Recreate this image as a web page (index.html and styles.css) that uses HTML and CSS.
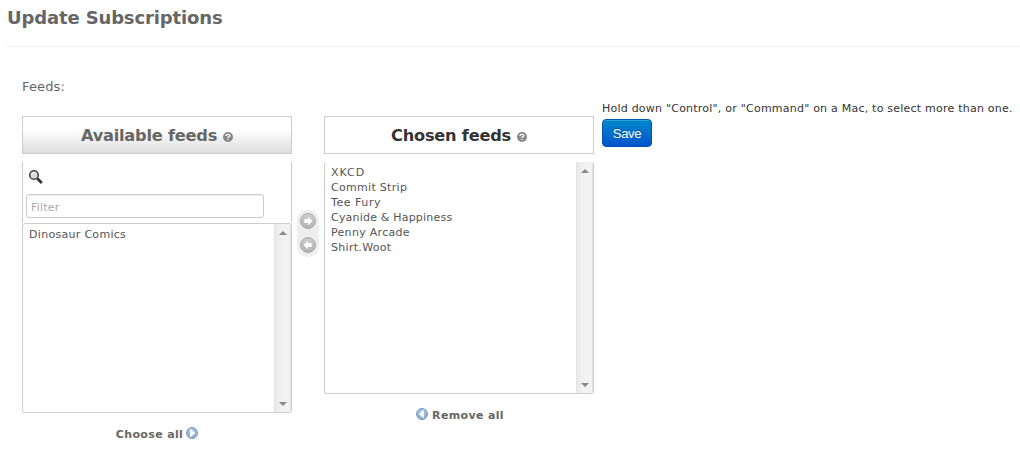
FILE: index.html
```html
<!DOCTYPE html>
<html lang="en">
<head>
<meta charset="utf-8">
<title>Update Subscriptions</title>
<link rel="stylesheet" href="styles.css">
</head>
<body>
<svg class="defs" width="0" height="0" aria-hidden="true">
  <defs>
    <linearGradient id="gray" x1="0" y1="0" x2="0" y2="1"><stop offset="0" stop-color="#cfcfcf"/><stop offset="1" stop-color="#b2b2b2"/></linearGradient>
    <linearGradient id="blue" x1="0" y1="0" x2="0" y2="1"><stop offset="0" stop-color="#a3c3e4"/><stop offset="1" stop-color="#8daccb"/></linearGradient>
    <symbol id="help" viewBox="0 0 10 10"><circle cx="5" cy="5" r="5" fill="#888"/><path d="M3 4V3.3Q3.4 2.3 5 2.3T6.9 3.6Q6.9 4.4 5.8 4.8T5 5.9M5 6.9V8" fill="none" stroke="#fff" stroke-width="1.3"/></symbol>
    <symbol id="arrow" viewBox="0 0 16 16"><circle cx="8" cy="8" r="7.5" fill="url(#gray)" stroke="#a9a9a9"/><path d="M4.3 6H8V3.8L12.5 8L8 12.2V10H4.3Z" fill="#fff"/></symbol>
    <symbol id="play" viewBox="0 0 12 12"><circle cx="6" cy="6" r="5.5" fill="url(#blue)" stroke="#7c9cbd"/><path d="M4.2 2.2H5.2L9.2 6L5.2 9.8H4.2Z" fill="#fff"/></symbol>
  </defs>
</svg>
<h1 class="title"><span>Update Subscriptions</span></h1>
<main class="form">
  <div class="label">Feeds:</div>
  <div class="row">
    <section class="column">
      <h2 class="heading available"><span>Available feeds</span><svg class="help"><use href="#help"/></svg></h2>
      <div class="filter">
        <svg class="search" viewBox="0 0 16 16"><path d="M9.3 9.5L13.8 14" stroke="#333" stroke-width="2.8"/><circle cx="6" cy="6" r="4.3" fill="#d9dddd" stroke="#444" stroke-width="1.6"/><path d="M3.6 5.4Q4.2 3.5 6.5 3.6" fill="none" stroke="#fff"/></svg>
        <input class="input" type="text" placeholder="Filter">
      </div>
      <div class="select short">
        <ul class="options"><li>Dinosaur Comics</li></ul>
        <div class="scrollbar"><i class="up"></i><i class="down"></i></div>
      </div>
      <a class="all choose"><span>Choose all</span><svg><use href="#play"/></svg></a>
    </section>
    <div class="chooser">
      <svg><use href="#arrow"/></svg>
      <svg class="flip"><use href="#arrow"/></svg>
    </div>
    <section class="column">
      <h2 class="heading chosen"><span>Chosen feeds</span><svg class="help"><use href="#help"/></svg></h2>
      <div class="select tall">
        <ul class="options"><li class="loose">XKCD</li><li>Commit Strip</li><li class="wide">Tee Fury</li><li class="snug">Cyanide &amp; Happiness</li><li>Penny Arcade</li><li>Shirt.Woot</li></ul>
        <div class="scrollbar"><i class="up"></i><i class="down"></i></div>
      </div>
      <a class="all remove"><svg class="flip"><use href="#play"/></svg><span>Remove all</span></a>
    </section>
    <div class="side">
      <p class="hint">Hold down "Control", or "Command" on a Mac, to select more than one.</p>
      <button class="save" type="button">Save</button>
    </div>
  </div>
</main>
</body>
</html>
```
FILE: styles.css
```css
* { box-sizing: border-box; }
body {
  margin: 0;
  height: 451px;
  overflow: hidden;
  background: #fff;
  color: #666;
  font: 11px/15px "DejaVu Sans", Verdana, sans-serif;
}
.defs { position: absolute; }
h1, h2, p, ul { margin: 0; padding: 0; }
ul { list-style: none; }
svg { flex: none; }
.flip { transform: scaleX(-1); }
.title {
  margin-left: 7px;
  height: 47px;
  padding-top: 6px;
  border-bottom: 1px solid #eee;
  font-size: 18px;
  line-height: 24px;
  letter-spacing: -0.14px;
  white-space: nowrap;
}
.form { padding: 31px 0 0 22px; }
.label { height: 22px; font-size: 13px; line-height: 18px; letter-spacing: 0.15px; }
.row { display: flex; align-items: flex-start; }
.column { width: 270px; padding-top: 16px; display: flex; flex-direction: column; }
.heading {
  display: flex;
  align-items: center;
  justify-content: center;
  gap: 6px;
  height: 38px;
  padding-top: 1px;
  margin-bottom: 8px;
  border: 1px solid #ccc;
  font-size: 16.2px;
  line-height: 24px;
  letter-spacing: -0.22px;
  white-space: nowrap;
}
.available { background: linear-gradient(#fff 35%, #ddd); }
.chosen { color: #333; }
.help { width: 10px; height: 10px; margin-top: 3px; }
.filter {
  height: 61px;
  padding: 7px 3px 0;
  border: solid #ccc;
  border-width: 0 1px;
}
.search { display: block; width: 16px; height: 16px; margin: 0 0 9px 2px; }
.input {
  display: block;
  width: 238px;
  height: 24px;
  padding: 2px 4px 0;
  border: 1px solid #ccc;
  border-radius: 3px;
  box-shadow: inset 0 1px 1px #eee;
  font: 11px/15px "DejaVu Sans", Verdana, sans-serif;
  letter-spacing: 0.2px;
}
.input::placeholder { color: #aaa; opacity: 1; }
.select {
  display: flex;
  justify-content: space-between;
  border: 1px solid #ccc;
  border-radius: 3px;
  color: #555;
}
.short { height: 190px; }
.tall { height: 232px; border-top: 0; }
.options { padding: 3px 6px; letter-spacing: 0.3px; white-space: nowrap; }
.loose { letter-spacing: 0.95px; }
.wide { letter-spacing: 0.55px; }
.snug { letter-spacing: 0.2px; }
.scrollbar {
  width: 17px;
  display: flex;
  flex-direction: column;
  align-items: center;
  justify-content: space-between;
  padding: 7px 0 6px;
  border-left: 1px solid #e3e3e3;
  border-right: 1px solid #e3e3e3;
  background: linear-gradient(90deg, #e9e9e9, #f2f2f2 50%);
}
.up, .down { width: 0; height: 0; border: solid transparent; border-width: 0 4px; }
.up { border-bottom: 4px solid #888; }
.down { border-top: 4px solid #888; }
.all {
  display: flex;
  align-items: center;
  justify-content: center;
  gap: 4px;
  height: 16px;
  margin-top: 13px;
  font-weight: bold;
  letter-spacing: 0.35px;
  white-space: nowrap;
}
.choose { gap: 3px; }
.remove { padding-left: 2px; }
.all svg { width: 12px; height: 12px; margin-top: -2px; }
.chooser {
  width: 22px;
  height: 47px;
  margin: 110px 5px 0;
  padding: 3px;
  border-radius: 11px;
  background: #eee;
  display: flex;
  flex-direction: column;
  gap: 8px;
}
.chooser svg { width: 16px; height: 16px; }
.side { margin-left: 8px; }
.hint { height: 19px; padding-top: 1px; color: #333; letter-spacing: 0.225px; white-space: nowrap; }
.save {
  display: block;
  width: 50px;
  height: 28px;
  padding: 2px 0 0;
  border: 1px solid #0055b3;
  border-radius: 4px;
  background: linear-gradient(#0088cc, #0055cc);
  box-shadow: inset 0 1px 0 rgba(255,255,255,.2);
  color: #fff;
  font: 13px/18px "Liberation Sans", Arial, sans-serif;
  letter-spacing: -0.3px;
  text-shadow: 0 -1px 0 rgba(0,0,0,.25);
}
```
